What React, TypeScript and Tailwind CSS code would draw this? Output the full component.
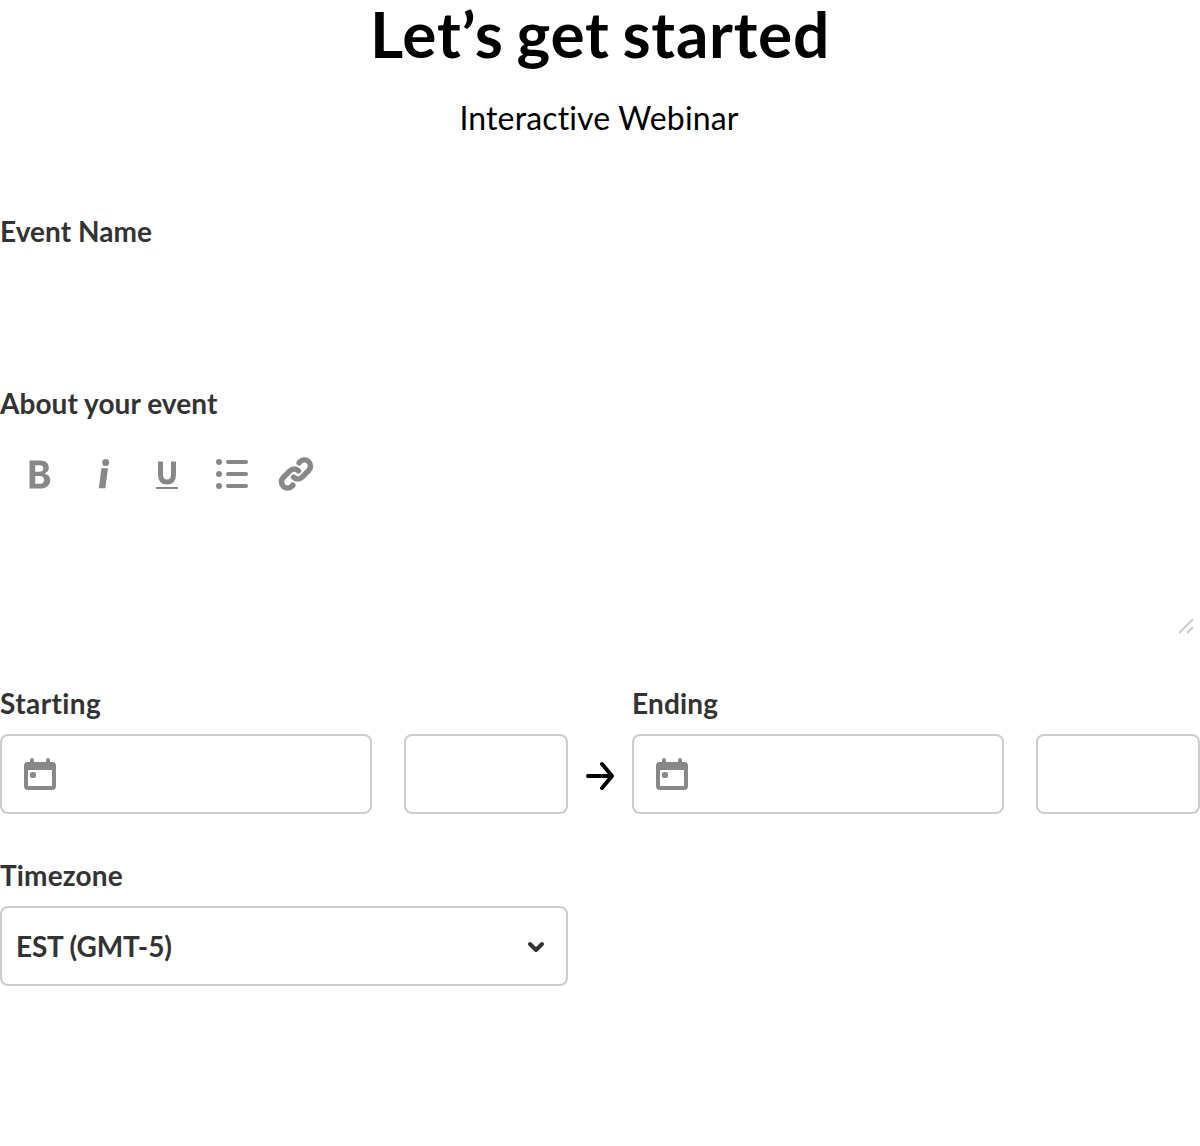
import React from "react";

function Label({ children, className = "tracking-[0.06px]" }: { children: React.ReactNode; className?: string }) {
  return (
    <div className={`h-10 text-[28px] font-bold leading-[38px] text-[#333333] ${className}`}>{children}</div>
  );
}

function CalendarIcon() {
  return (
    <svg width="32" height="32" viewBox="0 0 32 32" fill="none">
      <path d="M8 2v6M24 2v6" stroke="#888888" strokeWidth="4" strokeLinecap="round" />
      <path
        fillRule="evenodd"
        d="M4 4h24a4 4 0 0 1 4 4v20a4 4 0 0 1-4 4H4a4 4 0 0 1-4-4V8a4 4 0 0 1 4-4Zm0 8v16h24V12H4Z"
        fill="#888888"
      />
      <rect x="6" y="14" width="6" height="6" rx="2" fill="#888888" />
    </svg>
  );
}

function DateTime({ label, labelClass }: { label: string; labelClass: string }) {
  return (
    <div className="w-[568px]">
      <Label className={labelClass}>{label}</Label>
      <div className="mt-2.5 flex gap-8">
        <div className="flex h-20 w-[372px] items-center rounded-lg border-2 border-[#cccccc] pl-[22px]">
          <CalendarIcon />
        </div>
        <div className="h-20 w-[164px] rounded-lg border-2 border-[#cccccc]" />
      </div>
    </div>
  );
}

function Toolbar() {
  return (
    <div className="flex h-16 items-center gap-8 pl-6">
      <svg width="32" height="64" viewBox="24 442 32 64" fill="none">
        <path
          fillRule="evenodd"
          d="M29.5 460.5H40c5.8 0 8.8 2.8 8.8 7 0 3-1.5 5-4.3 6 3.6.9 5.7 3.2 5.7 6.7 0 5.1-3.9 8.3-9.8 8.3H29.5ZM35.2 465.2v6.5h4.1c2.5 0 4-1 4-3.3 0-2.2-1.3-3.2-3.7-3.2Zm0 10.8v7.8h4.7c2.8 0 4.2-1.4 4.2-4 0-2.5-1.5-3.8-4.4-3.8Z"
          fill="#888888"
        />
      </svg>
      <svg width="32" height="64" viewBox="88 442 32 64" fill="#888888">
        <circle cx="105.7" cy="462.5" r="3.5" />
        <path d="M101.4 468.3h6.6l-2.7 19.9h-6.5Z" />
      </svg>
      <svg width="32" height="64" viewBox="152 442 32 64" fill="none">
        <path
          d="M160.5 461.5v13c0 4.8 2.3 7.5 6.5 7.5s6.5-2.7 6.5-7.5v-13"
          stroke="#888888"
          strokeWidth="5"
        />
        <path d="M156 488h22" stroke="#888888" strokeWidth="2" />
      </svg>
      <svg width="32" height="64" viewBox="216 442 32 64" fill="#888888">
        <circle cx="219" cy="462" r="3" />
        <circle cx="219" cy="474" r="3" />
        <circle cx="219" cy="486" r="3" />
        <path
          d="M228 462h18M228 474h18M228 486h18"
          stroke="#888888"
          strokeWidth="4"
          strokeLinecap="round"
        />
      </svg>
      <svg
        width="36"
        height="64"
        viewBox="280 442 36 64"
        className="overflow-visible"
        fill="none"
        stroke="#888888"
        strokeWidth="5.5"
        strokeLinecap="round"
        strokeLinejoin="round"
      >
        <path d="M299.2 462.8l.6-.9c2.5-2.4 6.2-2.6 8.7-.4 2.7 2.5 2.7 6.4.2 9l-6.6 6.6c-2.7 2.7-6.2 2.6-8.6.1" />
        <path d="M292.8 485.2l-.6.9c-2.5 2.4-6.2 2.6-8.7.4-2.7-2.5-2.7-6.4-.2-9l6.6-6.6c2.7-2.7 6.2-2.6 8.6-.1" />
      </svg>
    </div>
  );
}

export default function App() {
  return (
    <main className="flex h-[1146px] w-[1200px] flex-col bg-white font-[Lato,sans-serif] text-black [font-variant-ligatures:none]">
      <h1 className="h-[72px] text-center text-[64px] font-bold leading-[68px] tracking-[0.75px] [word-spacing:-3.5px]">
        Let’s get started
      </h1>
      <p className="mt-[26px] h-10 pr-0.5 text-center text-[32px] leading-10 tracking-[0.15px]">
        Interactive Webinar
      </p>

      <section className="mt-[74px] h-[172px]">
        <Label>Event Name</Label>
      </section>

      <section className="flex h-[300px] flex-col">
        <Label>About your event</Label>
        <div className="mt-[18px] flex h-[198px] flex-col justify-between">
          <Toolbar />
          <svg className="mb-1.5 mr-1.5 self-end" width="16" height="16" viewBox="1178 618 16 16" fill="none">
            <path d="M1179 633l14-14M1187 633l6-6" stroke="#cccccc" strokeWidth="2" />
          </svg>
        </div>
      </section>

      <section className="flex h-[172px] gap-16">
        <DateTime label="Starting" labelClass="tracking-[0.42px]" />
        <svg className="-mx-12 mt-[76px] shrink-0" width="32" height="32" viewBox="584 760 32 32" fill="none">
          <path
            d="M588 776h24M602 764l10 12-10 12"
            stroke="black"
            strokeWidth="4"
            strokeLinecap="round"
            strokeLinejoin="round"
          />
        </svg>
        <DateTime label="Ending" labelClass="tracking-[0.15px]" />
      </section>

      <section>
        <Label className="tracking-[0.15px]">Timezone</Label>
        <div className="mt-2.5 flex h-20 w-[568px] items-center justify-between rounded-lg border-2 border-[#cccccc] pl-3.5 pr-[22px]">
          <span className="text-[28px] font-bold leading-10 tracking-[-0.17px] text-[#333333]">EST (GMT-5)</span>
          <svg width="16" height="16" viewBox="528 938 16 16" fill="none" className="overflow-visible">
            <path
              d="M530 944l6 6 6-6"
              stroke="#333333"
              strokeWidth="4"
              strokeLinecap="round"
              strokeLinejoin="round"
            />
          </svg>
        </div>
      </section>
    </main>
  );
}
